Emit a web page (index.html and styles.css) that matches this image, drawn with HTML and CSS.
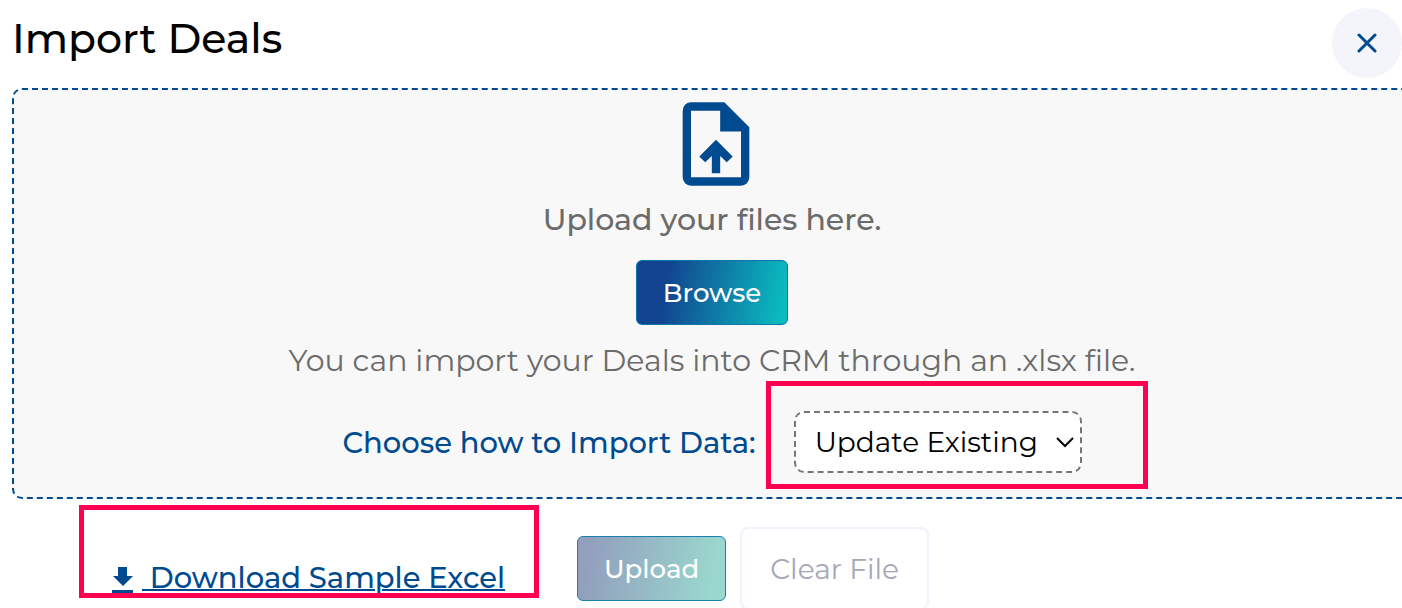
FILE: index.html
```html
<!DOCTYPE html>
<html lang="en">
<head>
    <meta charset="UTF-8">
    <meta name="viewport" content="width=device-width, initial-scale=1.0">
    <title>Import Deals</title>
    <link rel="stylesheet" href="styles.css">
</head>
<body>

<main class="import-modal">
    <header class="modal-header">
        <h1>Import Deals</h1>
        <button type="button" class="close-btn" aria-label="Close">
            <svg width="20" height="20" viewBox="0 0 20 20" fill="none" stroke="currentColor" stroke-width="3" stroke-linecap="round">
                <path d="M2 2L18 18M18 2L2 18"/>
            </svg>
        </button>
    </header>

    <section class="drop-zone">
        <svg class="file-icon" viewBox="0 0 24 24" fill="currentColor">
            <path fill-rule="evenodd" d="M6 2H14L20 8V20A2 2 0 0 1 18 22H6A2 2 0 0 1 4 20V4A2 2 0 0 1 6 2ZM6 4V20H18V9H13V4Z"/>
            <path d="M12 11L16 15L14.6 16.4L13 14.9V19H11V14.9L9.4 16.4L8 15Z"/>
        </svg>
        <p class="upload-text">Upload your files here.</p>
        <button type="button" class="btn browse-btn">Browse</button>
        <p class="hint">You can import your Deals into CRM through an .xlsx file.</p>
        <div class="import-mode">
            <label for="mode">Choose how to Import Data:</label>
            <div class="select-wrap">
                <select id="mode">
                    <option>Update Existing</option>
                </select>
                <svg class="chevron" width="18" height="11" viewBox="0 0 18 11" fill="none" stroke="currentColor" stroke-width="2">
                    <path d="M1 1L9 9L17 1"/>
                </svg>
            </div>
        </div>
    </section>

    <footer class="modal-footer">
        <a href="#" class="download-link">
            <svg width="22" height="26" viewBox="0 0 22 26" fill="currentColor">
                <path d="M6 0H15V9H21L11 19L1 9H6ZM0 23H21V26H0Z"/>
            </svg>
            <span>&nbsp;Download Sample Excel</span>
        </a>
        <button type="button" class="btn upload-btn">Upload</button>
        <button type="button" class="clear-btn">Clear File</button>
    </footer>
</main>

</body>
</html>
```
FILE: styles.css
```css
* {
    box-sizing: border-box;
}
body {
    margin: 0;
    background-color: #fff;
    font-family: 'Montserrat', 'Inter', sans-serif;
    font-size: 28px;
    color: #000;
    overflow: hidden;
}
button, select {
    font-family: inherit;
    font-size: inherit;
}
.import-modal {
    padding-left: 12px;
}
.modal-header {
    display: flex;
    justify-content: space-between;
    align-items: flex-start;
    padding-top: 8px;
}
.modal-header h1 {
    margin: 0;
    font-size: 41px;
    line-height: 60px;
    font-weight: 500;
}
.close-btn {
    display: flex;
    align-items: center;
    justify-content: center;
    width: 70px;
    height: 70px;
    border: none;
    border-radius: 50%;
    background-color: #f4f5fa;
    color: #004b8f;
    cursor: pointer;
}
/* the zone runs past the right edge of the window */
.drop-zone {
    display: flex;
    flex-direction: column;
    align-items: center;
    margin-top: 10px;
    margin-right: -10px;
    padding: 4px 0 24px;
    border: 2px dashed #004b8f;
    border-radius: 10px;
    background-color: #f8f8f8;
}
.file-icon {
    width: 100px;
    height: 100px;
    margin-left: 8px;
    color: #004b8f;
}
.upload-text {
    margin: 9px 0 23px;
    line-height: 34px;
    font-size: 30px;
    font-weight: 500;
    color: #6b6b6b;
}
.btn {
    height: 65px;
    padding: 0 26px;
    border: 1px solid #0f75a8;
    border-radius: 6px;
    color: #fff;
    font-size: 26px;
    font-weight: 500;
    cursor: pointer;
}
.browse-btn {
    background: linear-gradient(100deg, #12448f 20%, #0abcc0 96%);
}
.hint {
    margin: 19px 0 33px;
    line-height: 34px;
    font-size: 30px;
    color: #6b6b6b;
}
.import-mode {
    display: flex;
    align-items: center;
    gap: 38px;
}
.import-mode label {
    color: #004b8f;
    font-size: 29px;
    font-weight: 500;
}
.select-wrap {
    position: relative;
}
.select-wrap select {
    appearance: none;
    width: 288px;
    height: 62px;
    padding: 0 36px 0 19px;
    border: 2px dashed #757575;
    border-radius: 10px;
    background-color: #fff;
    color: #000;
}
.chevron {
    position: absolute;
    right: 8px;
    top: 26px;
    pointer-events: none;
}
/* highlight frames */
.select-wrap::after,
.download-link::after {
    content: "";
    position: absolute;
    border: 5px solid #ff0050;
    pointer-events: none;
}
.select-wrap::after {
    inset: -30px -66px -16px -28px;
}
.modal-footer {
    display: flex;
    align-items: center;
    padding: 28px 0 0 100px;
}
.download-link {
    position: relative;
    display: flex;
    align-items: center;
    gap: 8px;
    margin: 18px 72px 0 0;
    line-height: 34px;
    color: #004b8f;
    font-weight: 500;
    text-decoration: none;
}
.download-link svg {
    align-self: flex-end;
    margin-bottom: 2px;
}
.download-link span {
    font-size: 29px;
    text-decoration: underline;
    text-decoration-thickness: 2px;
}
.download-link::after {
    inset: -56px -34px -3px -33px;
}
.upload-btn {
    background: linear-gradient(100deg, #929fbd 8%, #9ad7ce 90%);
    border-color: #1b7fb0;
}
.clear-btn {
    height: 83px;
    margin-left: 14px;
    padding: 0 28px;
    border: 2px solid #f0f2fe;
    border-radius: 8px;
    background-color: #fff;
    color: #a5a7b8;
    cursor: pointer;
}
```
